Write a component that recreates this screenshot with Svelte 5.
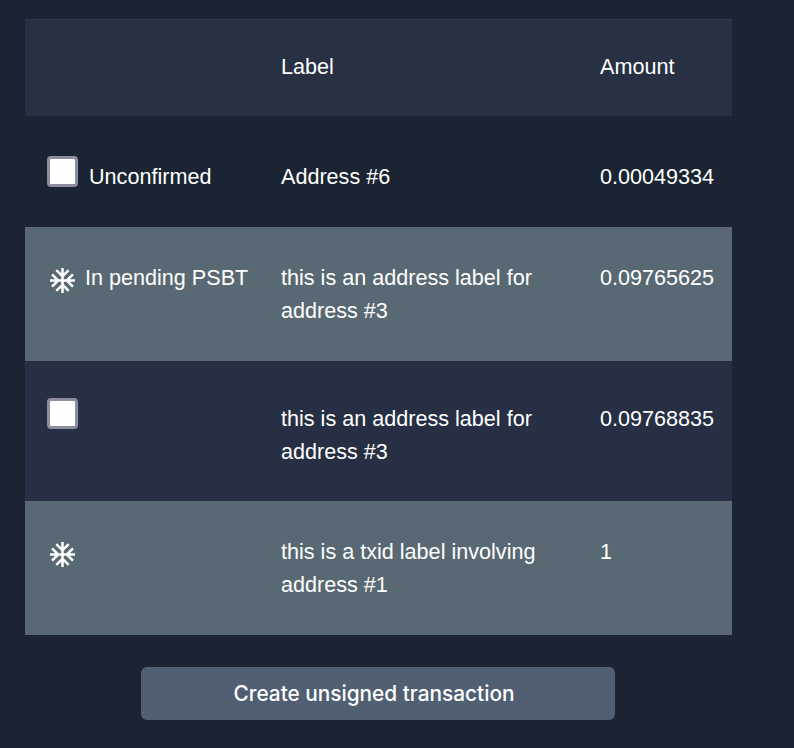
<script>
    const rows = [
        { id: "a", kind: "open", tone: "plain", status: "Unconfirmed", label: "Address #6", amount: "0.00049334" },
        { id: "b", kind: "frozen", tone: "frozen", status: "In pending PSBT", label: "this is an address label for address #3", amount: "0.09765625" },
        { id: "c", kind: "open", tone: "alt", status: "", label: "this is an address label for address #3", amount: "0.09768835" },
        { id: "d", kind: "frozen", tone: "frozen", status: "", label: "this is a txid label involving address #1", amount: "1" },
    ];
</script>

<main class="page">
    <table>
        <colgroup>
            <col class="col-status" />
            <col class="col-label" />
            <col class="col-amount" />
        </colgroup>
        <thead>
            <tr>
                <th></th>
                <th>Label</th>
                <th>Amount</th>
            </tr>
        </thead>
        <tbody>
            {#each rows as row (row.id)}
                <tr class={row.tone}>
                    <td>
                        <div class="status">
                            {#if row.kind === "open"}
                                <input type="checkbox" />
                            {:else}
                                <svg class="flake" viewBox="2 2 20 20" aria-hidden="true">
                                    <path d="M22 11h-4.17l3.24-3.24-1.41-1.42L15 11h-2V9l4.66-4.66-1.42-1.41L13 6.17V2h-2v4.17L7.76 2.93 6.34 4.34 11 9v2H9L4.34 6.34 2.93 7.76 6.17 11H2v2h4.17l-3.24 3.24 1.41 1.42L9 13h2v2l-4.66 4.66 1.42 1.41L11 17.83V22h2v-4.17l3.24 3.24 1.42-1.41L13 15v-2h2l4.66 4.66 1.41-1.42L17.83 13H22z" />
                                </svg>
                            {/if}
                            {#if row.status}<span>{row.status}</span>{/if}
                        </div>
                    </td>
                    <td>{row.label}</td>
                    <td>{row.amount}</td>
                </tr>
            {/each}
        </tbody>
    </table>
    <div class="actions">
        <button type="button">Create unsigned transaction</button>
    </div>
</main>

<style>
    :global(body) {
        background: #1a2432;
    }
    .page {
        width: 707px;
        margin-left: 25px;
        padding-top: 19px;
        font-family: "Liberation Sans", Arial, sans-serif;
        color: #fff;
    }
    table {
        width: 100%;
        table-layout: fixed;
        border-collapse: collapse;
        font-size: 21.6px;
        line-height: 33px;
    }
    .col-status {
        width: 234px;
    }
    .col-label {
        width: 319px;
    }
    th,
    td {
        padding: 0 0 0 22px;
        text-align: left;
        vertical-align: top;
        font-weight: 400;
    }
    thead tr {
        background: #283144;
        height: 97px;
    }
    th {
        vertical-align: middle;
        padding-bottom: 2px;
        box-shadow: inset 0 1px #2e384c;
    }
    tbody td {
        padding-top: 34px;
        padding-bottom: 34px;
    }
    tr.plain td {
        padding-top: 44px;
        padding-bottom: 34px;
    }
    tr.alt {
        background: #262f44;
    }
    tr.alt td {
        padding-top: 41px;
        padding-bottom: 33px;
    }
    tr.frozen {
        background: #596973;
    }
    .status {
        display: flex;
        align-items: flex-start;
        white-space: nowrap;
    }
    input[type="checkbox"] {
        appearance: none;
        flex: none;
        box-sizing: border-box;
        width: 31px;
        height: 31px;
        margin: -4px 11px 0 0;
        background: #fff;
        border: 3px solid #8c8e9f;
        border-radius: 4px;
    }
    .flake {
        flex: none;
        width: 25px;
        height: 25px;
        margin: 7px 10px 0 3px;
        fill: #fff;
    }
    .actions {
        display: flex;
        justify-content: center;
        padding: 32px 1px 0 0;
    }
    button {
        width: 474px;
        height: 53px;
        padding: 0 8px 0 0;
        border: 0;
        border-radius: 6px;
        background: #515f73;
        color: #fff;
        font-family: Inter, sans-serif;
        font-size: 20.8px;
        font-weight: 500;
    }
</style>
